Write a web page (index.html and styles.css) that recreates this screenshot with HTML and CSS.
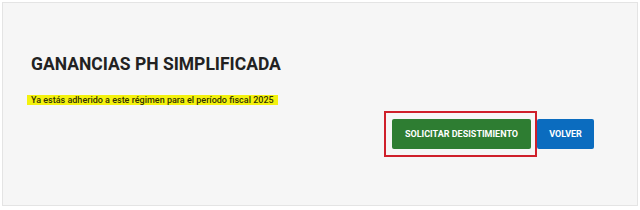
FILE: index.html
```html
<!DOCTYPE html>
<html lang="es">
<head>
    <meta charset="UTF-8">
    <meta name="viewport" content="width=device-width, initial-scale=1.0">
    <title>Ganancias PH Simplificada</title>
    <link rel="stylesheet" href="styles.css">
</head>
<body>

    <div class="panel">
        <h1 class="title">GANANCIAS PH SIMPLIFICADA</h1>
        <p class="notice"><span class="highlight">Ya estás adherido a este régimen para el período fiscal 2025</span></p>
        <div class="actions">
            <button type="button" class="btn btn-green marked">SOLICITAR DESISTIMIENTO</button>
            <button type="button" class="btn btn-blue">VOLVER</button>
        </div>
    </div>

</body>
</html>
```

FILE: styles.css
```css
body {
    font-family: 'Roboto', 'Liberation Sans', sans-serif;
    background-color: #ffffff;
    margin: 0;
    padding: 2px;
}

/* Main panel */
.panel {
    background-color: #f6f6f6;
    border: 1px solid #e4e4e4;
    height: 204px;
    box-sizing: border-box;
    padding: 50px 43px 0 28px;
    width: 636px;
}

.title {
    margin: 0;
    font-size: 17.5px;
    font-weight: bold;
    color: #222222;
    line-height: 22px;
}

.notice {
    margin: 20px 0 0 -4px;
    font-size: 9px;
    line-height: 11px;
    color: #333300;
    font-weight: 500;
}

.highlight {
    background-color: #f4f20e;
    padding: 0 4px;
}

/* Buttons */
.actions {
    display: flex;
    justify-content: flex-end;
    gap: 6px;
    margin-top: 13px;
}

.btn {
    border: none;
    border-radius: 2px;
    color: #ffffff;
    font-family: inherit;
    font-size: 9px;
    font-weight: bold;
    height: 30px;
    padding: 0;
    white-space: nowrap;
    cursor: pointer;
}

.btn-green {
    background-color: #2e7d32;
    width: 139px;
}

.btn-blue {
    background-color: #0b6cbf;
    width: 57px;
}

/* Red annotation box around the green button */
.marked {
    position: relative;
}

.marked::after {
    content: "";
    position: absolute;
    left: -8px;
    top: -8px;
    right: -6px;
    bottom: -8px;
    border: 2px solid #cf1f2a;
}
```
